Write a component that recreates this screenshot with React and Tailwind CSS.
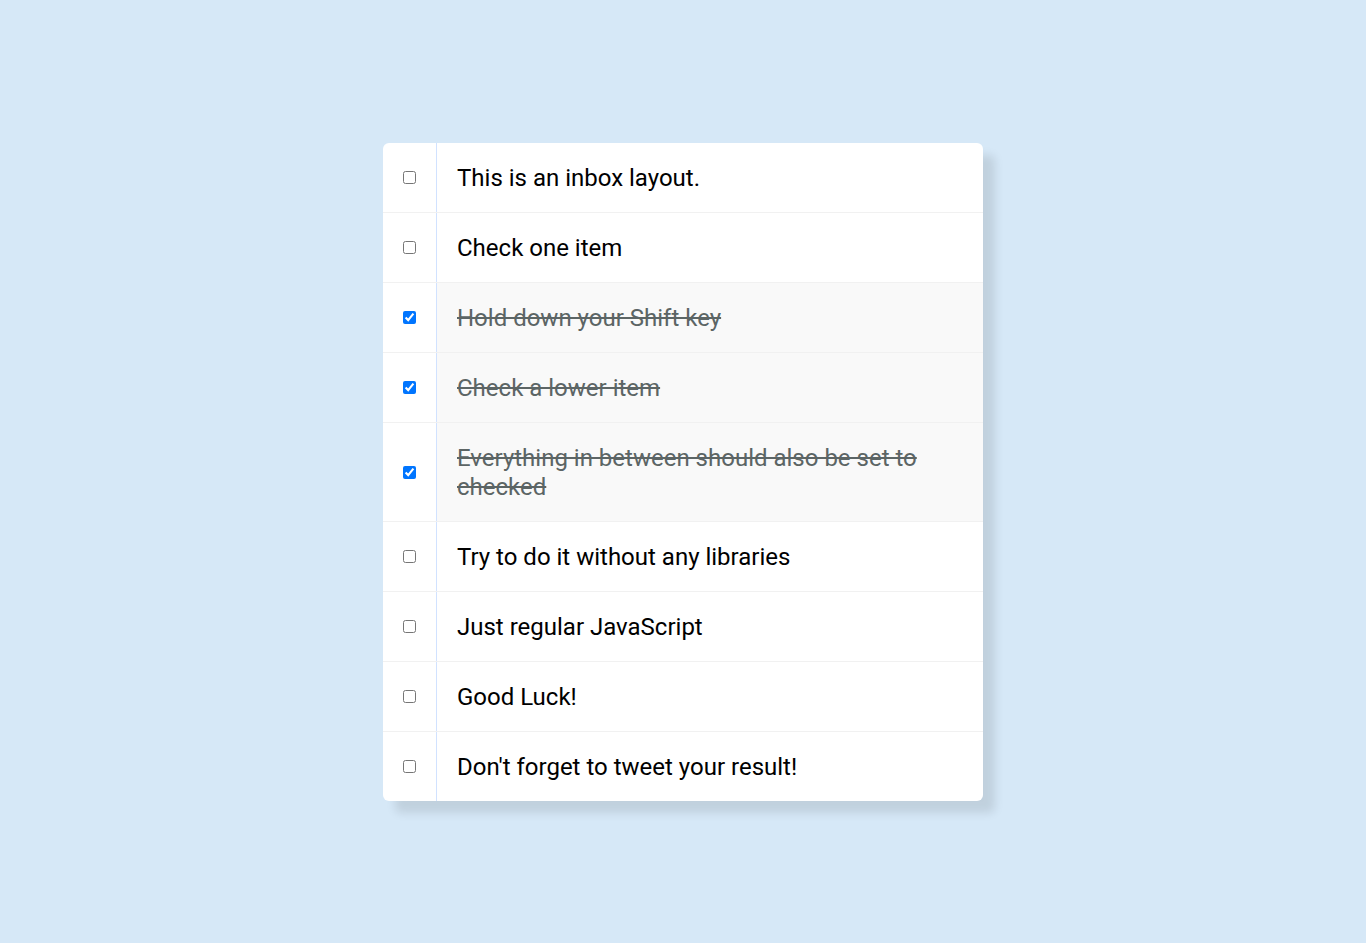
import { useState } from 'react'

const initialItems = [
  { text: 'This is an inbox layout.', done: false },
  { text: 'Check one item', done: false },
  { text: 'Hold down your Shift key', done: true },
  { text: 'Check a lower item', done: true },
  { text: 'Everything in between should also be set to checked', done: true },
  { text: 'Try to do it without any libraries', done: false },
  { text: 'Just regular JavaScript', done: false },
  { text: 'Good Luck!', done: false },
  { text: "Don't forget to tweet your result!", done: false },
]

export default function App() {
  const [items, setItems] = useState(initialItems)
  const [lastChecked, setLastChecked] = useState(null)

  // shift-click checks everything between the last box and this one
  const handleCheck = (index, e) => {
    const checked = e.target.checked
    setItems((prev) => {
      const next = prev.map((item) => ({ ...item }))
      if (e.nativeEvent.shiftKey && checked && lastChecked !== null) {
        const [from, to] = [Math.min(index, lastChecked), Math.max(index, lastChecked)]
        for (let i = from; i <= to; i++) next[i].done = true
      } else {
        next[index].done = checked
      }
      return next
    })
    setLastChecked(index)
  }

  return (
    <div className="min-h-screen bg-[#d6e8f7] pt-[143px] font-['Roboto',sans-serif]">
      <div className="mx-auto w-[600px] rounded-[6px] bg-white shadow-[12px_12px_10px_rgba(0,0,0,0.1)]">
        {items.map((item, i) => (
          <div
            key={i}
            className="flex items-center border-b border-[#f1f1f1] last:border-b-0"
          >
            <input
              type="checkbox"
              className="m-5 h-[13px] w-[13px] shrink-0"
              checked={item.done}
              onChange={(e) => handleCheck(i, e)}
            />
            <p
              className={`m-0 flex-1 border-l border-[#d1e2ff] px-5 pt-[21px] pb-[19px] text-[24px] leading-[29px] ${
                item.done ? 'bg-[#f9f9f9] text-[#5c6565] line-through' : 'text-black'
              } ${i === 0 ? 'rounded-tr-[6px]' : ''} ${i === items.length - 1 ? 'rounded-br-[6px]' : ''}`}
            >
              {item.text}
            </p>
          </div>
        ))}
      </div>
    </div>
  )
}
